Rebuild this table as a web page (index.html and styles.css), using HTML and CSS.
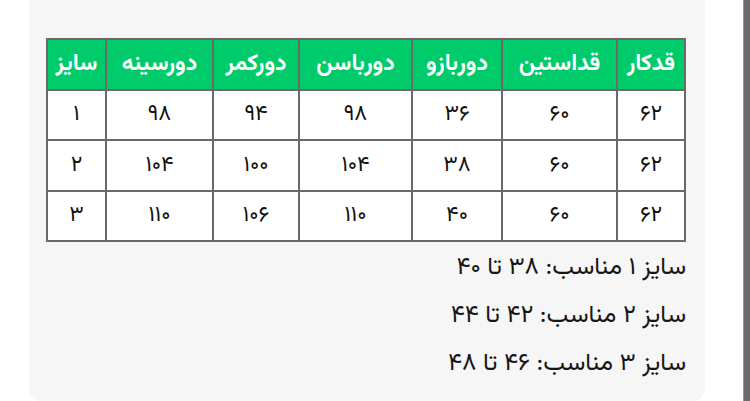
FILE: index.html
```html
<!DOCTYPE html>
<html lang="fa" dir="rtl">
<head>
<meta charset="utf-8">
<link rel="stylesheet" href="styles.css">
</head>
<body>
<div class="page">
  <div class="panel">
    <table class="sizes">
      <colgroup>
        <col class="c1"><col class="c2"><col class="c3"><col class="c4"><col class="c5"><col class="c6"><col class="c7">
      </colgroup>
      <thead>
        <tr><th>قدکار</th><th>قداستین</th><th>دوربازو</th><th>دورباسن</th><th>دورکمر</th><th>دورسینه</th><th>سایز</th></tr>
      </thead>
      <tbody>
        <tr><td>۶۲</td><td>۶۰</td><td>۳۶</td><td>۹۸</td><td>۹۴</td><td>۹۸</td><td>۱</td></tr>
        <tr><td>۶۲</td><td>۶۰</td><td>۳۸</td><td>۱۰۴</td><td>۱۰۰</td><td>۱۰۴</td><td>۲</td></tr>
        <tr><td>۶۲</td><td>۶۰</td><td>۴۰</td><td>۱۱۰</td><td>۱۰۶</td><td>۱۱۰</td><td>۳</td></tr>
      </tbody>
    </table>
    <div class="notes">
      <p>سایز ۱ مناسب: ۳۸ تا ۴۰</p>
      <p>سایز ۲ مناسب: ۴۲ تا ۴۴</p>
      <p>سایز ۳ مناسب: ۴۶ تا ۴۸</p>
    </div>
  </div>
  <div class="scrollbar"></div>
</div>
</body>
</html>
```
FILE: styles.css
```css
html, body {
  margin: 0;
  padding: 0;
  background: #ffffff;
}
body {
  font-family: "Vazirmatn", "Noto Sans Arabic", "DejaVu Sans", sans-serif;
  color: #111;
}
.page {
  display: flex;
  justify-content: space-between;
  width: 750px;
  height: 401px;
  overflow: hidden;
  direction: ltr;
}
.panel {
  direction: rtl;
  margin-left: 29px;
  width: 676px;
  height: 401px;
  box-sizing: border-box;
  padding: 38px 19px 0 19px;
  background: #f6f6f6;
  border-radius: 0 0 12px 12px;
}
.scrollbar {
  width: 7px;
  height: 401px;
  background: #6b6b6b;
  border-left: 1px solid #9a9a9a;
  box-sizing: border-box;
}
.sizes {
  width: 638px;
  border-collapse: collapse;
  table-layout: fixed;
  background: #ffffff;
}
.c1 { width: 68px; }
.c2 { width: 115px; }
.c3 { width: 90px; }
.c4 { width: 113px; }
.c5 { width: 86px; }
.c6 { width: 107px; }
.c7 { width: 59px; }
.sizes th, .sizes td {
  border: 2px solid #6a6a6a;
  height: 48.5px;
  padding: 0;
  text-align: center;
  vertical-align: middle;
}
.sizes th {
  background: #00cb6b;
  color: #ffffff;
  font-weight: bold;
  font-size: 23px;
}
.sizes td {
  font-size: 22px;
  color: #111;
}
.notes {
  padding-top: 2px;
}
.notes p {
  margin: 0;
  line-height: 48px;
  font-size: 24.5px;
  color: #151515;
}
```
